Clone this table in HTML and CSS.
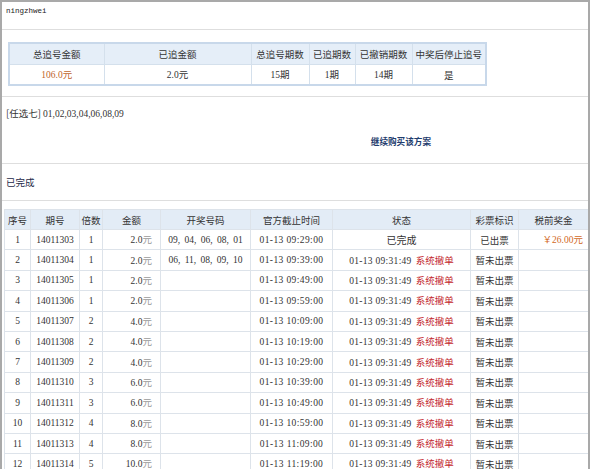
FILE: index.html
```html
<!DOCTYPE html>
<html lang="zh-CN">
<head>
<meta charset="utf-8">
<link rel="stylesheet" href="styles.css">
</head>
<body>
<div class="page">
  <div class="user">ningzhwei</div>

  <div class="summary">
    <table class="sum">
      <colgroup><col style="width:95px"><col style="width:147px"><col style="width:58px"><col style="width:46px"><col style="width:57px"><col style="width:74px"></colgroup>
      <tr class="sh"><th>总追号金额</th><th>已追金额</th><th>总追号期数</th><th>已追期数</th><th>已撤销期数</th><th>中奖后停止追号</th></tr>
      <tr class="sd"><td class="orange"><span class="n">106.0</span>元</td><td><span class="n">2.0</span>元</td><td><span class="n">15</span>期</td><td><span class="n">1</span>期</td><td><span class="n">14</span>期</td><td>是</td></tr>
    </table>
  </div>

  <div class="plan">
    <div class="pick">[任选七] <span class="n">01,02,03,04,06,08,09</span></div>
    <div class="again"><a class="buy">继续购买该方案</a></div>
  </div>

  <div class="status">已完成</div>

  <table class="list">
    <colgroup><col style="width:26px"><col style="width:49px"><col style="width:23px"><col style="width:58px"><col style="width:90px"><col style="width:82px"><col style="width:138px"><col style="width:48px"><col style="width:70px"></colgroup>
    <tr class="lh"><th>序号</th><th>期号</th><th>倍数</th><th>金额</th><th>开奖号码</th><th>官方截止时间</th><th>状态</th><th>彩票标识</th><th>税前奖金</th></tr>
    <tr><td class="n">1</td><td class="n">14011303</td><td class="n">1</td><td class="amt"><span class="n">2.0</span><span class="yuan">元</span></td><td class="n draw">09, 04, 06, 08, 01</td><td class="n time">01-13 09:29:00</td><td class="done">已完成</td><td class="issued">已出票</td><td class="prize">￥<span class="n">26.00</span>元</td></tr>
    <tr><td class="n">2</td><td class="n">14011304</td><td class="n">1</td><td class="amt"><span class="n">2.0</span><span class="yuan">元</span></td><td class="n draw">06, 11, 08, 09, 10</td><td class="n time">01-13 09:39:00</td><td><span class="n st">01-13 09:31:49</span> <span class="red">系统撤单</span></td><td>暂未出票</td><td></td></tr>
    <tr><td class="n">3</td><td class="n">14011305</td><td class="n">1</td><td class="amt"><span class="n">2.0</span><span class="yuan">元</span></td><td></td><td class="n time">01-13 09:49:00</td><td><span class="n st">01-13 09:31:49</span> <span class="red">系统撤单</span></td><td>暂未出票</td><td></td></tr>
    <tr><td class="n">4</td><td class="n">14011306</td><td class="n">1</td><td class="amt"><span class="n">2.0</span><span class="yuan">元</span></td><td></td><td class="n time">01-13 09:59:00</td><td><span class="n st">01-13 09:31:49</span> <span class="red">系统撤单</span></td><td>暂未出票</td><td></td></tr>
    <tr><td class="n">5</td><td class="n">14011307</td><td class="n">2</td><td class="amt"><span class="n">4.0</span><span class="yuan">元</span></td><td></td><td class="n time">01-13 10:09:00</td><td><span class="n st">01-13 09:31:49</span> <span class="red">系统撤单</span></td><td>暂未出票</td><td></td></tr>
    <tr><td class="n">6</td><td class="n">14011308</td><td class="n">2</td><td class="amt"><span class="n">4.0</span><span class="yuan">元</span></td><td></td><td class="n time">01-13 10:19:00</td><td><span class="n st">01-13 09:31:49</span> <span class="red">系统撤单</span></td><td>暂未出票</td><td></td></tr>
    <tr><td class="n">7</td><td class="n">14011309</td><td class="n">2</td><td class="amt"><span class="n">4.0</span><span class="yuan">元</span></td><td></td><td class="n time">01-13 10:29:00</td><td><span class="n st">01-13 09:31:49</span> <span class="red">系统撤单</span></td><td>暂未出票</td><td></td></tr>
    <tr><td class="n">8</td><td class="n">14011310</td><td class="n">3</td><td class="amt"><span class="n">6.0</span><span class="yuan">元</span></td><td></td><td class="n time">01-13 10:39:00</td><td><span class="n st">01-13 09:31:49</span> <span class="red">系统撤单</span></td><td>暂未出票</td><td></td></tr>
    <tr><td class="n">9</td><td class="n">14011311</td><td class="n">3</td><td class="amt"><span class="n">6.0</span><span class="yuan">元</span></td><td></td><td class="n time">01-13 10:49:00</td><td><span class="n st">01-13 09:31:49</span> <span class="red">系统撤单</span></td><td>暂未出票</td><td></td></tr>
    <tr><td class="n">10</td><td class="n">14011312</td><td class="n">4</td><td class="amt"><span class="n">8.0</span><span class="yuan">元</span></td><td></td><td class="n time">01-13 10:59:00</td><td><span class="n st">01-13 09:31:49</span> <span class="red">系统撤单</span></td><td>暂未出票</td><td></td></tr>
    <tr><td class="n">11</td><td class="n">14011313</td><td class="n">4</td><td class="amt"><span class="n">8.0</span><span class="yuan">元</span></td><td></td><td class="n time">01-13 11:09:00</td><td><span class="n st">01-13 09:31:49</span> <span class="red">系统撤单</span></td><td>暂未出票</td><td></td></tr>
    <tr><td class="n">12</td><td class="n">14011314</td><td class="n">5</td><td class="amt"><span class="n">10.0</span><span class="yuan">元</span></td><td></td><td class="n time">01-13 11:19:00</td><td><span class="n st">01-13 09:31:49</span> <span class="red">系统撤单</span></td><td>暂未出票</td><td></td></tr>
  </table>
</div>
</body>
</html>
```

FILE: styles.css
```css
html, body {
  margin: 0;
  padding: 0;
  background: #fff;
}
body {
  font-family: "Noto Sans CJK SC", sans-serif;
  font-size: 9.5px;
  line-height: 12px;
  color: #333;
}
.page {
  width: 586px;
  border-top: 2px solid #a9a9a9;
  border-left: 2px solid #a9a9a9;
  border-right: 2px solid #a9a9a9;
  height: 467px;
  overflow: hidden;
}
.n {
  font-family: "Liberation Serif", serif;
  font-size: 9.5px;
}
.user {
  font-family: "Liberation Mono", monospace;
  font-size: 7.5px;
  color: #222;
  line-height: 12px;
  height: 12px;
  padding: 3px 4px 12px;
  border-bottom: 1px solid #dedede;
}
.summary {
  padding: 12px 0 10px 6px;
  border-bottom: 1px solid #dedede;
}
table {
  border-collapse: collapse;
  table-layout: fixed;
}
.sum {
  border: 2px solid #c8d8ea;
}
.sum th, .sum td {
  border: 1px solid #d4e0ec;
  text-align: center;
  padding: 0;
  font-weight: normal;
  line-height: 12px;
}
.sh th {
  background: #e5eef8;
  height: 20px;
  color: #333;
}
.sd td {
  height: 19px;
  background: #fff;
}
.orange {
  color: #c0652c;
}
.plan {
  padding: 10px 4px 16px;
  border-bottom: 1px solid #dedede;
}
.pick {
  line-height: 12px;
  height: 12px;
  color: #333;
}
.again {
  margin-top: 16px;
  line-height: 12px;
  height: 12px;
  display: flex;
  justify-content: flex-end;
  padding-right: 153px;
}
.buy {
  font-weight: bold;
  color: #1f3d6e;
  font-size: 8.6px;
}
.status {
  padding: 12px 4px;
  height: 12px;
  line-height: 12px;
  color: #1e2a48;
  border-bottom: 1px solid #dedede;
}
.list {
  margin: 8px 0 0 2px;
  width: 584px;
  border: 1px solid #d3dbe4;
}
.list th, .list td {
  border: 1px solid #dde3ea;
  text-align: center;
  padding: 0;
  font-weight: normal;
  white-space: nowrap;
  overflow: hidden;
  line-height: 12px;
}
.lh th {
  background: #e3ecf6;
  height: 19px;
  color: #333;
}
.list td {
  height: 19.4px;
  color: #333;
}
.list td.amt {
  text-align: right;
  padding-right: 8px;
}
.yuan {
  color: #9a9a9a;
}
.draw {
  color: #b5642b;
  word-spacing: 2px;
}
.time {
  letter-spacing: 0.4px;
}
.st {
  letter-spacing: 0.3px;
  margin-right: 2px;
}
.done {
  color: #111;
  font-size: 10px;
}
.issued {
  color: #2d5c8a;
}
.list td.prize {
  text-align: right;
  padding-right: 5px;
  color: #d2691e;
}
.red {
  color: #c3262c;
}
```
